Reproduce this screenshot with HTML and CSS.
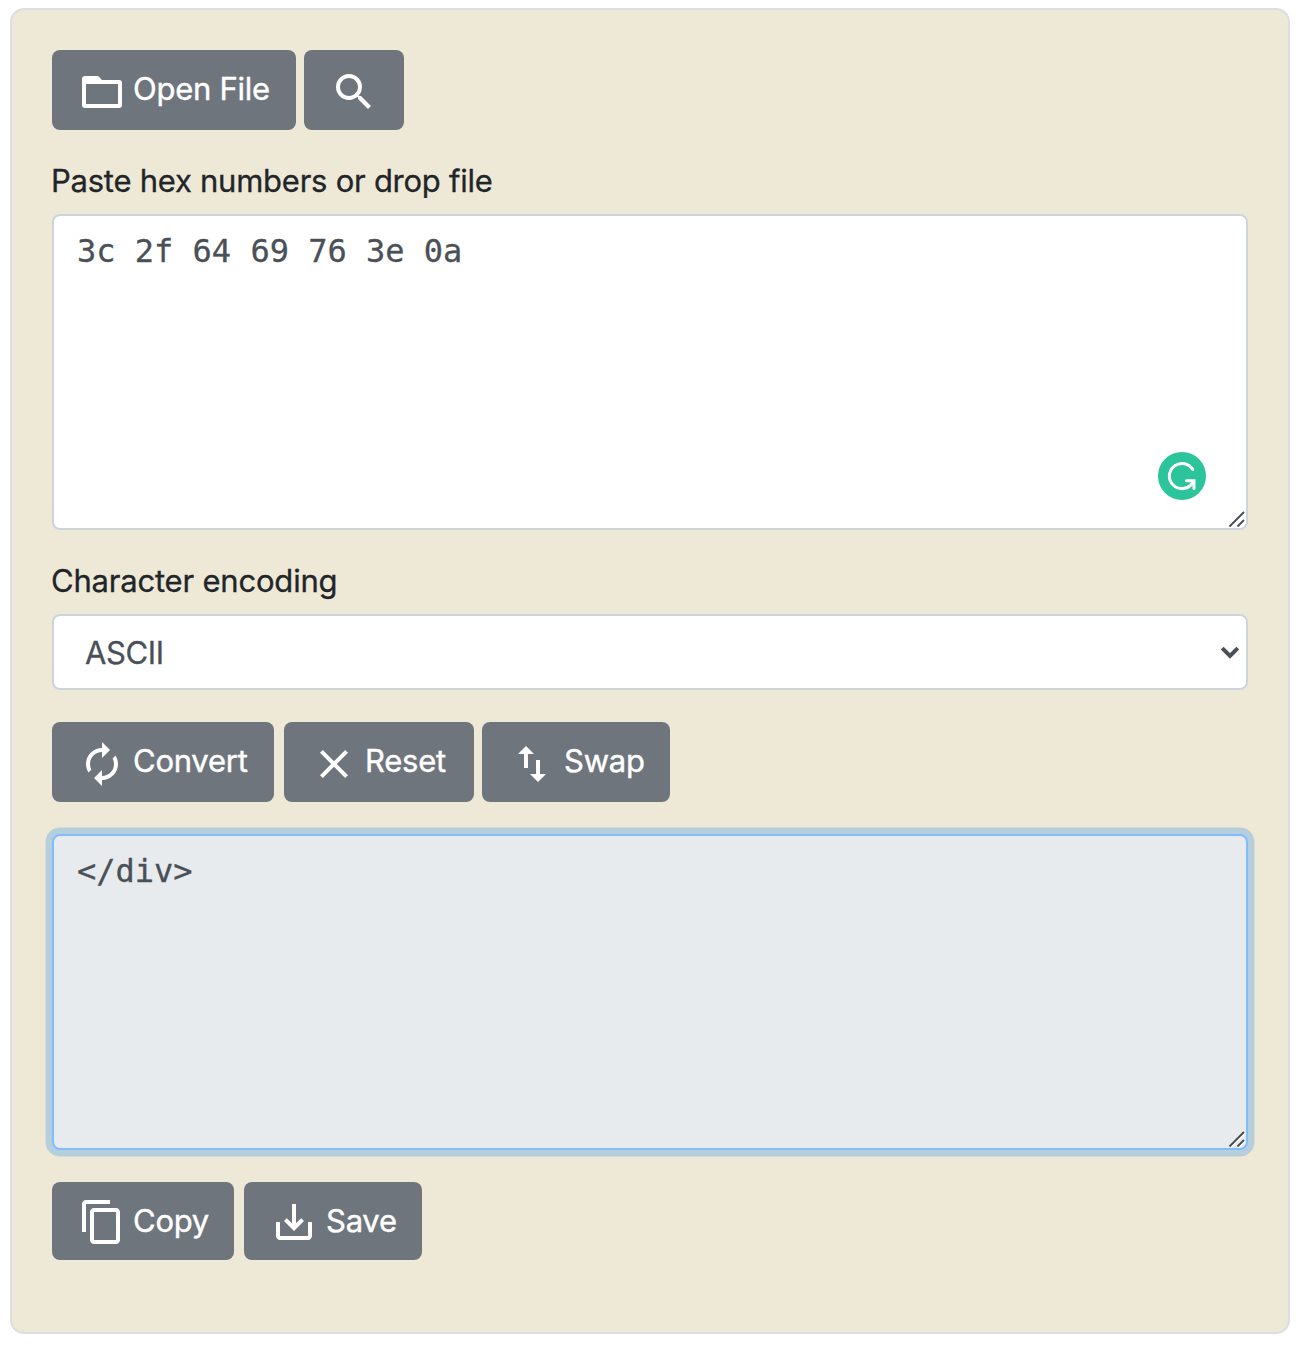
FILE: index.html
```html
<!DOCTYPE html>
<html lang="en">
<head>
<meta charset="utf-8">
<title>Hex to ASCII converter</title>
<link rel="stylesheet" href="styles.css">
</head>
<body>
<form class="card">
  <div class="toolbar">
    <button type="button" class="btn btn-open"><svg class="icon" viewBox="0 0 24 24"><path d="M20 6h-8l-1.500-1.600Q10.100 4 9.500 4H3.500Q2 4 2 5.500v13Q2 20 3.500 20h17q1.500 0 1.500-1.500v-11Q22 6 20.500 6zm0 12H4V8h16z"/></svg><span>Open File</span></button>
    <button type="button" class="btn btn-search" aria-label="Search"><svg class="icon" viewBox="0 0 24 24"><path d="M15.500 14h-.79l-.28-.27A6.471 6.471 0 0 0 16 9.500 6.500 6.500 0 1 0 9.500 16c1.610 0 3.090-.59 4.230-1.570l.27.28v.79l5 4.990L20.490 19l-4.990-5zm-6 0C7.010 14 5 11.990 5 9.500S7.010 5 9.500 5 14 7.010 14 9.500 11.990 14 9.500 14z"/></svg></button>
  </div>

  <label class="label label-input" for="source">Paste hex numbers or drop file</label>
  <div class="area">
    <textarea id="source" class="control" spellcheck="false">3c 2f 64 69 76 3e 0a</textarea>
    <svg class="badge" viewBox="0 0 48 48"><circle class="badge-disc" cx="24" cy="24" r="24"/><path class="badge-mark" d="M34.800 17.600A12.600 12.600 0 1 0 32.500 33.300L36 29.500M28.500 28.700H36V36.500"/></svg>
    <svg class="grip" viewBox="0 0 18 18"><path class="grip-halo" d="M2.500 17.500L17 3M10.500 17.500L17 11"/><path class="grip-line" d="M1.500 16.500L16 2M9.500 16.500L16 10"/></svg>
  </div>

  <label class="label label-encoding" for="encoding">Character encoding</label>
  <div class="select-wrap">
    <select id="encoding" class="select"><option>ASCII</option></select>
    <svg class="chevron" viewBox="0 0 20 14"><path d="M2.200 3.200L10 11l7.800-7.800"/></svg>
  </div>

  <div class="toolbar toolbar-actions">
    <button type="button" class="btn btn-convert"><svg class="icon" viewBox="0 0 24 24"><path d="M12 6v3l4-4-4-4v3c-4.420 0-8 3.580-8 8 0 1.570.46 3.030 1.240 4.260L6.700 14.800A5.870 5.870 0 0 1 6 12c0-3.310 2.690-6 6-6zm6.760 1.740L17.300 9.200c.44.84.7 1.790.7 2.800 0 3.310-2.690 6-6 6v-3l-4 4 4 4v-3c4.420 0 8-3.580 8-8 0-1.570-.46-3.030-1.240-4.260z"/></svg><span>Convert</span></button>
    <button type="button" class="btn btn-reset"><svg class="icon" viewBox="0 0 24 24"><path d="M19 6.410L17.590 5 12 10.590 6.410 5 5 6.410 10.590 12 5 17.590 6.410 19 12 13.410 17.590 19 19 17.590 13.410 12z"/></svg><span>Reset</span></button>
    <button type="button" class="btn btn-swap"><svg class="icon" viewBox="0 0 24 24"><path d="M16 17.010V10h-2v7.010h-3L15 21l4-3.990zM9 3L5 6.990h3V14h2V6.990h3z"/></svg><span>Swap</span></button>
  </div>

  <div class="area area-output">
    <textarea class="control control-output" readonly spellcheck="false">&lt;/div&gt;</textarea>
    <svg class="grip" viewBox="0 0 18 18"><path class="grip-halo" d="M2.500 17.500L17 3M10.500 17.500L17 11"/><path class="grip-line" d="M1.500 16.500L16 2M9.500 16.500L16 10"/></svg>
  </div>

  <div class="toolbar toolbar-output">
    <button type="button" class="btn btn-copy"><svg class="icon" viewBox="0 0 24 24"><path d="M16 1H4c-1.100 0-2 .9-2 2v14h2V3h12zm3 4H8c-1.100 0-2 .9-2 2v14c0 1.100.9 2 2 2h11c1.100 0 2-.9 2-2V7c0-1.100-.9-2-2-2zm0 16H8V7h11z"/></svg><span>Copy</span></button>
    <button type="button" class="btn btn-save"><svg class="icon" viewBox="0 0 24 24"><path d="M19 12v7H5v-7H3v7c0 1.100.9 2 2 2h14c1.100 0 2-.9 2-2v-7zm-6 .67l2.590-2.580L17 11.500l-5 5-5-5 1.410-1.410L11 12.670V3h2z"/></svg><span>Save</span></button>
  </div>
</form>
</body>
</html>
```
FILE: styles.css
```css
* { box-sizing: border-box; }

body {
  margin: 0;
  padding: 8px 12px 16px 10px;
  background: #fff;
  color: #212529;
  font: 31px/48px Inter, "Liberation Sans", sans-serif;
  -webkit-text-stroke: 0.3px currentColor;
}

.card {
  display: flex;
  flex-direction: column;
  height: 1326px;
  padding: 40px;
  border: 2px solid #dddee1;
  border-radius: 14px;
  background: #eee8d6;
}

.toolbar { display: flex; gap: 8px; }
.toolbar-actions { margin-top: 32px; }
.toolbar-output { margin-top: 32px; gap: 10px; }

.btn {
  display: flex;
  height: 80px;
  padding: 15px 0 0 26px;
  border: 0;
  border-radius: 8px;
  background: #6e757c;
  color: #fff;
  font: inherit;
  letter-spacing: -0.25px;
  white-space: nowrap;
  -webkit-text-stroke: 0.4px #fff;
}
.btn span { margin-left: 7px; }
.icon {
  flex: none;
  width: 48px;
  height: 48px;
  margin-top: 3px;
  fill: currentColor;
}

.btn-open { width: 244px; }
.btn-search { width: 100px; }
.btn-convert { width: 222px; margin-right: 2px; }
.btn-reset { width: 190px; }
.btn-swap { width: 188px; }
.btn-swap span { margin-left: 8px; }
.btn-copy { width: 182px; height: 78px; }
.btn-save { width: 178px; height: 78px; }
.btn-save span { margin-left: 8px; }
.toolbar-output .icon { margin-top: 1px; }

.label { height: 48px; margin: 27px 0 9px -1px; }
.label-input { letter-spacing: -0.25px; }
.label-encoding { letter-spacing: -0.2px; }

.area { position: relative; height: 316px; }
.area-output { margin-top: 32px; }

.control {
  display: block;
  width: 100%;
  height: 100%;
  padding: 11px 23px;
  border: 2px solid #ced4dc;
  border-radius: 8px;
  background: #fff;
  color: #495057;
  font: 32px/48px "DejaVu Sans Mono", monospace;
  -webkit-text-stroke: 0.3px #495057;
  resize: none;
  outline: 0;
}
.control-output {
  border-color: #80bdff;
  background: #e8ebed;
  box-shadow: 0 0 0 6.4px #b7cedd;
}

.badge {
  position: absolute;
  right: 42px;
  bottom: 30px;
  width: 48px;
  height: 48px;
}
.badge-disc { fill: #2bc49b; }
.badge-mark { fill: none; stroke: #fff; stroke-width: 3; stroke-linecap: round; }

.grip {
  position: absolute;
  right: 2px;
  bottom: 2px;
  width: 18px;
  height: 18px;
  fill: none;
}
.grip-halo { stroke: #fff; stroke-width: 1.5; }
.grip-line { stroke: #4a4a4a; stroke-width: 1.8; }

.select-wrap { position: relative; height: 76px; }
.select {
  width: 100%;
  height: 76px;
  padding: 2px 31px 0;
  border: 2px solid #ced4dc;
  border-radius: 8px;
  background: #fff;
  color: #495057;
  font: inherit;
  letter-spacing: -0.4px;
  -webkit-text-stroke: 0.3px #495057;
  appearance: none;
}
.chevron {
  position: absolute;
  top: 31px;
  right: 8px;
  width: 20px;
  height: 14px;
  fill: none;
  stroke: #495057;
  stroke-width: 4;
}
```
